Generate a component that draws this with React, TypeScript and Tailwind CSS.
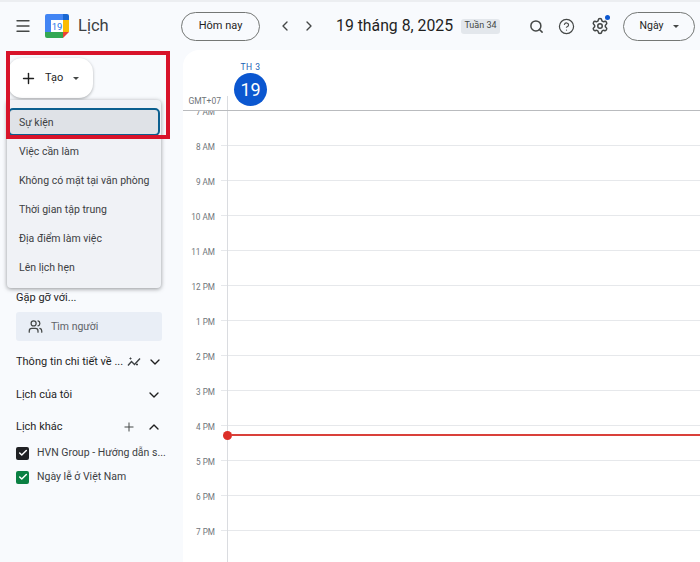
import { ChevronDown, ChevronLeft, ChevronRight, ChevronUp, CircleHelp, Menu, Plus, Search, Settings, Users, Check } from "lucide-react";

const hours = ["7 AM", "8 AM", "9 AM", "10 AM", "11 AM", "12 PM", "1 PM", "2 PM", "3 PM", "4 PM", "5 PM", "6 PM", "7 PM"];
const menu = ["Sự kiện", "Việc cần làm", "Không có mặt tại văn phòng", "Thời gian tập trung", "Địa điểm làm việc", "Lên lịch hẹn"];

function Logo() {
  return (
    <svg width="24" height="24" viewBox="0 0 24 24" className="shrink-0">
      <path d="M2 0h16v6H6v12H0V2a2 2 0 0 1 2-2z" fill="#4285f4" />
      <path d="M18 0h4a2 2 0 0 1 2 2v4h-6z" fill="#1967d2" />
      <rect x="18" y="6" width="6" height="12" fill="#fbbc04" />
      <path d="M0 18h18v6H2a2 2 0 0 1-2-2z" fill="#34a853" />
      <path d="M18 18h6l-6 6z" fill="#ea4335" />
      <rect x="6" y="6" width="12" height="12" fill="#fff" />
      <text x="12" y="15.5" textAnchor="middle" fontSize="9.5" fontFamily="Roboto, sans-serif" fill="#1a73e8">19</text>
    </svg>
  );
}

function Insights() {
  return (
    <svg width="14" height="14" viewBox="0 0 14 14" fill="none" stroke="#3c4043" strokeWidth="1.4">
      <path d="M1 10.5 4.5 6.5 7.5 9.5 13 3.5" />
      <path d="M3.5 2.5v2M2.5 3.5h2M10 8.5v2M9 9.5h2" strokeWidth="1" />
    </svg>
  );
}

export default function App() {
  return (
    <div className="relative flex h-[562px] w-[700px] flex-col overflow-hidden border-t-2 border-[#eceef1] bg-[#f8fafd] font-['Roboto',sans-serif] text-[#3c4043]">
      <header className="flex h-[48px] shrink-0 items-center">
        <Menu className="ml-[14px] h-[18px] w-[18px] shrink-0 text-[#444746]" strokeWidth={1.8} />
        <div className="ml-[13px]"><Logo /></div>
        <span className="ml-[9px] w-[103px] shrink-0 pt-[1px] text-[16.5px] text-[#3c4043]">Lịch</span>
        <button className="h-[29px] w-[79px] shrink-0 rounded-full border border-[#747775] text-[11px] text-[#1f1f1f]">Hôm nay</button>
        <ChevronLeft className="ml-[17px] h-[16px] w-[16px] shrink-0 text-[#444746]" strokeWidth={2} />
        <ChevronRight className="ml-[8px] h-[16px] w-[16px] shrink-0 text-[#444746]" strokeWidth={2} />
        <span className="ml-[19px] w-[125px] shrink-0 whitespace-nowrap text-[15.8px] text-[#1f1f1f]">19 tháng 8, 2025</span>
        <span className="flex h-[15px] w-[39px] shrink-0 items-center justify-center rounded-[3px] bg-[#e3e7ec] text-[9px] text-[#444746]">Tuần 34</span>
        <Search className="ml-[29px] h-[15px] w-[15px] shrink-0 text-[#444746]" strokeWidth={2.4} />
        <CircleHelp className="ml-[14px] h-[17px] w-[17px] shrink-0 text-[#444746]" strokeWidth={1.7} />
        <div className="relative ml-[16px]">
          <Settings className="h-[18px] w-[18px] text-[#444746]" strokeWidth={2} />
          <span className="absolute -right-[1px] -top-[2px] h-[5px] w-[5px] rounded-full bg-[#0b57d0]" />
        </div>
        <button className="ml-[14px] flex h-[29px] w-[72px] shrink-0 items-center justify-center gap-[9px] rounded-full border border-[#747775] text-[10.5px] text-[#1f1f1f]">
          Ngày
          <span className="h-0 w-0 border-x-[3.5px] border-t-[3.5px] border-x-transparent border-t-[#444746]" />
        </button>
      </header>

      <div className="flex min-h-0 flex-1">
        <aside className="relative w-[183px] shrink-0">
          <button className="ml-[8px] mt-[8px] flex h-[40px] w-[85px] items-center rounded-[14px] bg-white pl-[12px] text-[11px] text-[#1f1f1f] shadow-[0_1px_3px_rgba(60,64,67,0.4)]">
            <Plus className="h-[17px] w-[17px] shrink-0" strokeWidth={2} />
            <span className="ml-[8px]">Tạo</span>
            <span className="ml-[10px] h-0 w-0 border-x-[3.5px] border-t-[3.5px] border-x-transparent border-t-[#444746]" />
          </button>

          <ul className="absolute left-[7px] top-[50px] z-10 flex h-[188px] w-[154px] flex-col rounded-[4px] bg-[#f0f2f6] pt-[8px] text-[10.5px] text-[#3c4043] shadow-[0_1px_4px_rgba(60,64,67,0.55)]">
            {menu.map((m, i) => (
              <li
                key={m}
                className={
                  i === 0
                    ? "mx-[1px] mb-[1px] flex h-[28px] items-center rounded-[5px] border-2 border-[#0b5f8f] bg-[#dfe2e7] pl-[9px] pt-[1px]"
                    : "flex h-[29px] items-center whitespace-nowrap pl-[12px] pt-[1px]"
                }
              >
                {m}
              </li>
            ))}
          </ul>

          <div className="mt-[193px] pl-[16px] pr-[21px] text-[11px] text-[#3c4043]">
            <div className="flex h-[14px] items-center text-[#1f1f1f]">Gặp gỡ với...</div>
            <div className="mt-[7px] flex h-[29px] items-center rounded-[3px] bg-[#e9eef6] pl-[12px] text-[10.5px] text-[#5f6368]">
              <Users className="h-[15px] w-[15px] text-[#444746]" strokeWidth={2} />
              <span className="ml-[8px]">Tìm người</span>
            </div>
            <div className="mt-[14px] flex h-[14px] items-center text-[#1f1f1f]">
              <span className="whitespace-nowrap">Thông tin chi tiết về ...</span>
              <span className="ml-[4px]"><Insights /></span>
              <ChevronDown className="ml-[6px] h-[16px] w-[16px] shrink-0 text-[#1f1f1f]" strokeWidth={2} />
            </div>
            <div className="mt-[19px] flex h-[14px] items-center justify-between text-[#1f1f1f]">
              <span>Lịch của tôi</span>
              <ChevronDown className="h-[16px] w-[16px] shrink-0" strokeWidth={2} />
            </div>
            <div className="mt-[18px] flex h-[14px] items-center text-[#1f1f1f]">
              <span>Lịch khác</span>
              <Plus className="ml-auto h-[14px] w-[14px] shrink-0 text-[#444746]" strokeWidth={1.7} />
              <ChevronUp className="ml-[10px] h-[16px] w-[16px] shrink-0" strokeWidth={2} />
            </div>
            <div className="mt-[12px] flex h-[14px] items-center whitespace-nowrap text-[10.5px] text-[#3c4043]">
              <span className="flex h-[13px] w-[13px] shrink-0 items-center justify-center rounded-[2px] bg-[#202124]">
                <Check className="h-[10px] w-[10px] text-white" strokeWidth={3.5} />
              </span>
              <span className="ml-[8px]">HVN Group - Hướng dẫn s...</span>
            </div>
            <div className="mt-[10px] flex h-[14px] items-center whitespace-nowrap text-[10.5px] text-[#3c4043]">
              <span className="flex h-[13px] w-[13px] shrink-0 items-center justify-center rounded-[2px] bg-[#0b8043]">
                <Check className="h-[10px] w-[10px] text-white" strokeWidth={3.5} />
              </span>
              <span className="ml-[8px]">Ngày lễ ở Việt Nam</span>
            </div>
          </div>
        </aside>

        <main className="relative min-w-0 flex-1 overflow-hidden rounded-tl-[16px] bg-white">
          <div className="flex h-[60px]">
            <div className="flex w-[44px] shrink-0 items-end justify-end pb-[2px] pr-[6px] text-[8.5px] text-[#70757a]">GMT+07</div>
            <div className="relative w-[56px]">
              <div className="absolute bottom-0 left-0 h-[14px] border-l border-[#dadce0]" />
              <div className="ml-[7px] flex w-[33px] flex-col items-center pt-[12px]">
                <span className="text-[8.5px] leading-[11px] tracking-[0.5px] text-[#1a5fb4]">TH 3</span>
                <span className="flex h-[33px] w-[33px] items-center justify-center rounded-full bg-[#0b57d0] text-[18px] text-white">19</span>
              </div>
            </div>
          </div>

          <div className="relative overflow-hidden border-t border-[#b9bbbe]">
            {hours.map((h, i) => (
              <div key={h} className="flex h-[35px]">
                <div className="relative w-[45px] shrink-0 border-r border-[#dadce0]">
                  <span className="absolute right-[12px] top-[1px] -translate-y-1/2 whitespace-nowrap text-[8.2px] text-[#70757a]">{h}</span>
                  {i > 0 && <span className="absolute right-0 top-[-1px] h-px w-[6px] bg-[#e6e8eb]" />}
                </div>
                <div className={i > 0 ? "-mt-px h-px flex-1 bg-[#e6e8eb]" : "flex-1"} />
              </div>
            ))}
            <div className="absolute left-[40px] right-0 top-[319.5px] flex items-center">
              <span className="h-[9px] w-[9px] shrink-0 rounded-full bg-[#dc2f28]" />
              <span className="-ml-px h-[2px] flex-1 bg-[#d9403a]" />
            </div>
          </div>
        </main>
      </div>

      <div className="pointer-events-none absolute left-[6px] top-[49px] z-20 h-[88px] w-[164px] border-[4px] border-[#d8132a]" />
    </div>
  );
}
